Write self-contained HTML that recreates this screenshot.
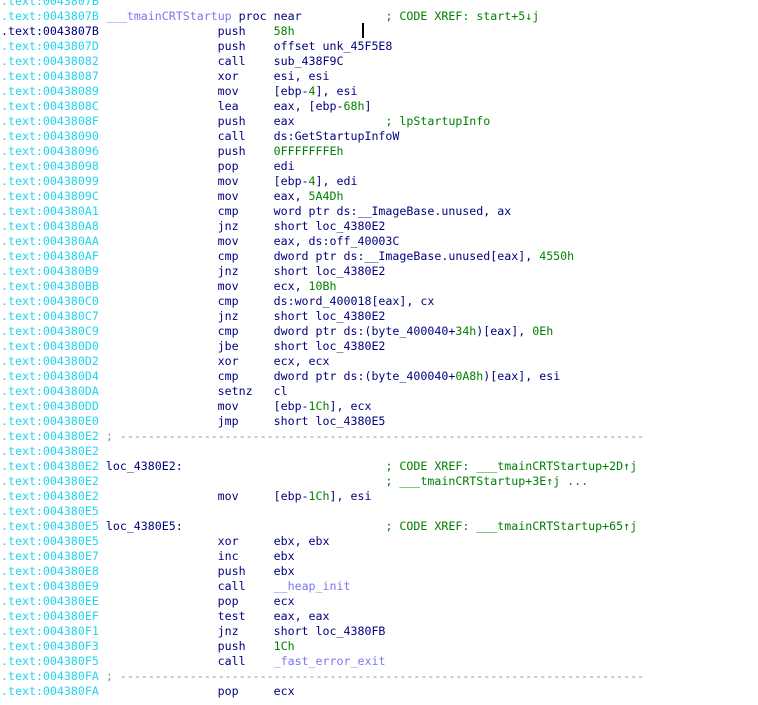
<!DOCTYPE html>
<html><head><meta charset="utf-8"><style>
html,body{margin:0;padding:0;background:#fff;width:758px;height:705px;overflow:hidden}
pre{position:absolute;left:1px;top:-6px;margin:0;font-family:"DejaVu Sans Mono","Liberation Mono",monospace;font-size:11.62px;line-height:15px;color:#000080;white-space:pre}
.a{color:#22d4ee}.s{color:#000080}.g{color:#008000}.l{color:#7878f0}.d{color:#909090}
.cur{position:absolute;left:362px;top:23px;width:2px;height:15px;background:#000}
</style></head><body>
<pre><span class="a">.text:0043807B</span>
<span class="a">.text:0043807B</span> <span class="l">___tmainCRTStartup</span> proc near            <span class="g">; CODE XREF: start+5↓j</span>
<span class="s">.text:0043807B</span>                 push    <span class="g">58h</span>
<span class="a">.text:0043807D</span>                 push    offset unk_45F5E8
<span class="a">.text:00438082</span>                 call    sub_438F9C
<span class="a">.text:00438087</span>                 xor     esi, esi
<span class="a">.text:00438089</span>                 mov     [ebp-<span class="g">4</span>], esi
<span class="a">.text:0043808C</span>                 lea     eax, [ebp-<span class="g">68h</span>]
<span class="a">.text:0043808F</span>                 push    eax             <span class="g">; lpStartupInfo</span>
<span class="a">.text:00438090</span>                 call    ds:GetStartupInfoW
<span class="a">.text:00438096</span>                 push    <span class="g">0FFFFFFFEh</span>
<span class="a">.text:00438098</span>                 pop     edi
<span class="a">.text:00438099</span>                 mov     [ebp-<span class="g">4</span>], edi
<span class="a">.text:0043809C</span>                 mov     eax, <span class="g">5A4Dh</span>
<span class="a">.text:004380A1</span>                 cmp     word ptr ds:__ImageBase.unused, ax
<span class="a">.text:004380A8</span>                 jnz     short loc_4380E2
<span class="a">.text:004380AA</span>                 mov     eax, ds:off_40003C
<span class="a">.text:004380AF</span>                 cmp     dword ptr ds:__ImageBase.unused[eax], <span class="g">4550h</span>
<span class="a">.text:004380B9</span>                 jnz     short loc_4380E2
<span class="a">.text:004380BB</span>                 mov     ecx, <span class="g">10Bh</span>
<span class="a">.text:004380C0</span>                 cmp     ds:word_400018[eax], cx
<span class="a">.text:004380C7</span>                 jnz     short loc_4380E2
<span class="a">.text:004380C9</span>                 cmp     dword ptr ds:(byte_400040+<span class="g">34h</span>)[eax], <span class="g">0Eh</span>
<span class="a">.text:004380D0</span>                 jbe     short loc_4380E2
<span class="a">.text:004380D2</span>                 xor     ecx, ecx
<span class="a">.text:004380D4</span>                 cmp     dword ptr ds:(byte_400040+<span class="g">0A8h</span>)[eax], esi
<span class="a">.text:004380DA</span>                 setnz   cl
<span class="a">.text:004380DD</span>                 mov     [ebp-<span class="g">1Ch</span>], ecx
<span class="a">.text:004380E0</span>                 jmp     short loc_4380E5
<span class="a">.text:004380E2</span> <span class="d">; ---------------------------------------------------------------------------</span>
<span class="a">.text:004380E2</span>
<span class="a">.text:004380E2</span> loc_4380E2:                             <span class="g">; CODE XREF: ___tmainCRTStartup+2D↑j</span>
<span class="a">.text:004380E2</span>                                         <span class="g">; ___tmainCRTStartup+3E↑j ...</span>
<span class="a">.text:004380E2</span>                 mov     [ebp-<span class="g">1Ch</span>], esi
<span class="a">.text:004380E5</span>
<span class="a">.text:004380E5</span> loc_4380E5:                             <span class="g">; CODE XREF: ___tmainCRTStartup+65↑j</span>
<span class="a">.text:004380E5</span>                 xor     ebx, ebx
<span class="a">.text:004380E7</span>                 inc     ebx
<span class="a">.text:004380E8</span>                 push    ebx
<span class="a">.text:004380E9</span>                 call    <span class="l">__heap_init</span>
<span class="a">.text:004380EE</span>                 pop     ecx
<span class="a">.text:004380EF</span>                 test    eax, eax
<span class="a">.text:004380F1</span>                 jnz     short loc_4380FB
<span class="a">.text:004380F3</span>                 push    <span class="g">1Ch</span>
<span class="a">.text:004380F5</span>                 call    <span class="l">_fast_error_exit</span>
<span class="a">.text:004380FA</span> <span class="d">; ---------------------------------------------------------------------------</span>
<span class="a">.text:004380FA</span>                 pop     ecx
</pre>
<div class="cur"></div>
</body></html>
